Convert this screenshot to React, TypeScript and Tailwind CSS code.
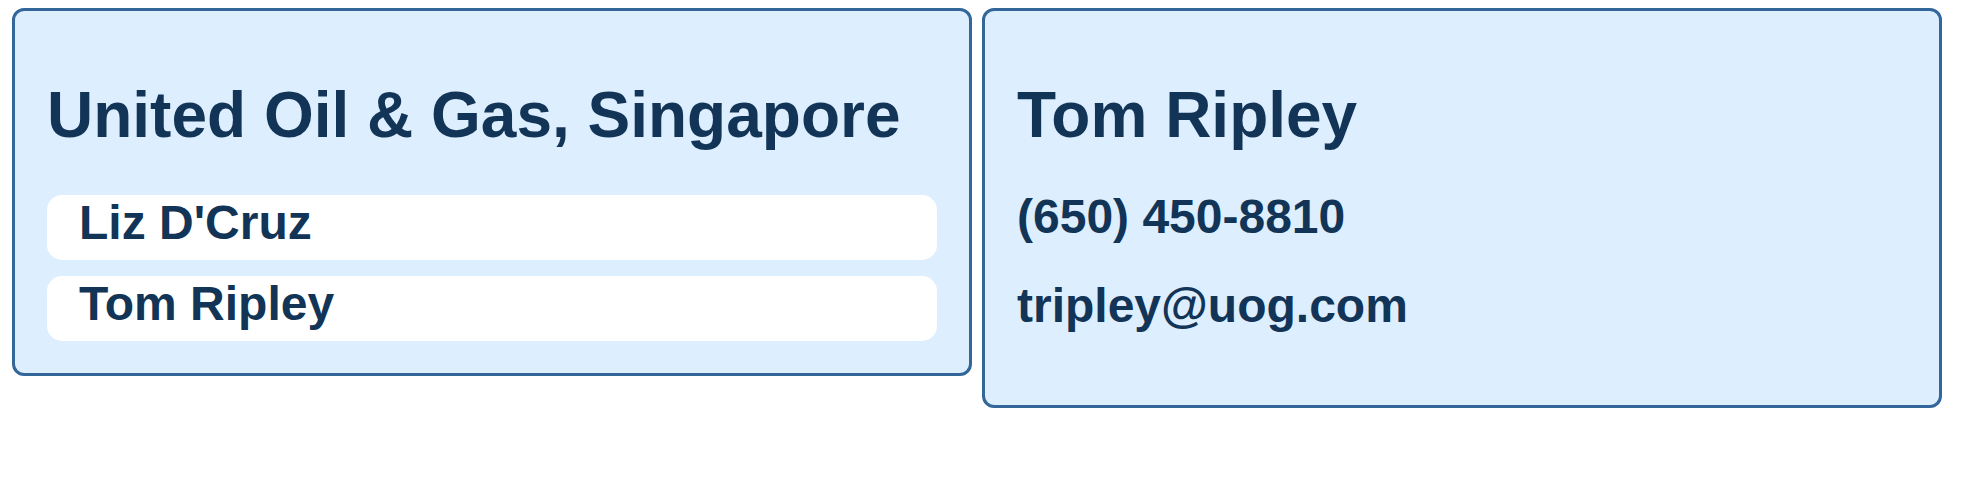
const contacts = [
  { name: "Liz D'Cruz", phone: "(650) 555-0101", email: "lcruz@uog.com" },
  { name: "Tom Ripley", phone: "(650) 450-8810", email: "tripley@uog.com" },
];

function Card({ children }: { children: React.ReactNode }) {
  return (
    <div className="w-[960px] shrink-0 rounded-xl border-[3px] border-[#336699] bg-[#ddeeff] px-8 pt-[68px]">
      {children}
    </div>
  );
}

function CompanyCard({ selected }: { selected: string }) {
  return (
    <Card>
      <h1 className="text-[64px] leading-[72px] font-bold">
        United Oil &amp; Gas, Singapore
      </h1>
      <ul className="mt-[44px] flex flex-col gap-4 pb-8">
        {contacts.map((contact) => (
          <li
            className="h-[65px] rounded-[15px] bg-white pl-8 text-[48px] leading-[56px] font-bold"
            data-selected={contact.name === selected}
            key={contact.name}
          >
            {contact.name}
          </li>
        ))}
      </ul>
    </Card>
  );
}

function ContactCard({ name }: { name: string }) {
  const contact = contacts.find((c) => c.name === name) ?? contacts[0];
  return (
    <Card>
      <h1 className="text-[64px] leading-[72px] font-bold">{contact.name}</h1>
      <p className="mt-[38px] text-[48px] leading-[56px] font-bold">
        {contact.phone}
      </p>
      <p className="mt-[33px] pb-[71px] text-[48px] leading-[56px] font-bold">
        {contact.email}
      </p>
    </Card>
  );
}

export default function App() {
  const selected = "Tom Ripley";
  return (
    <div className="flex min-h-[494px] items-start gap-[10px] bg-white pt-2 pl-3 font-['Liberation_Sans',Arial,sans-serif] text-[#123456]">
      <CompanyCard selected={selected} />
      <ContactCard name={selected} />
    </div>
  );
}
